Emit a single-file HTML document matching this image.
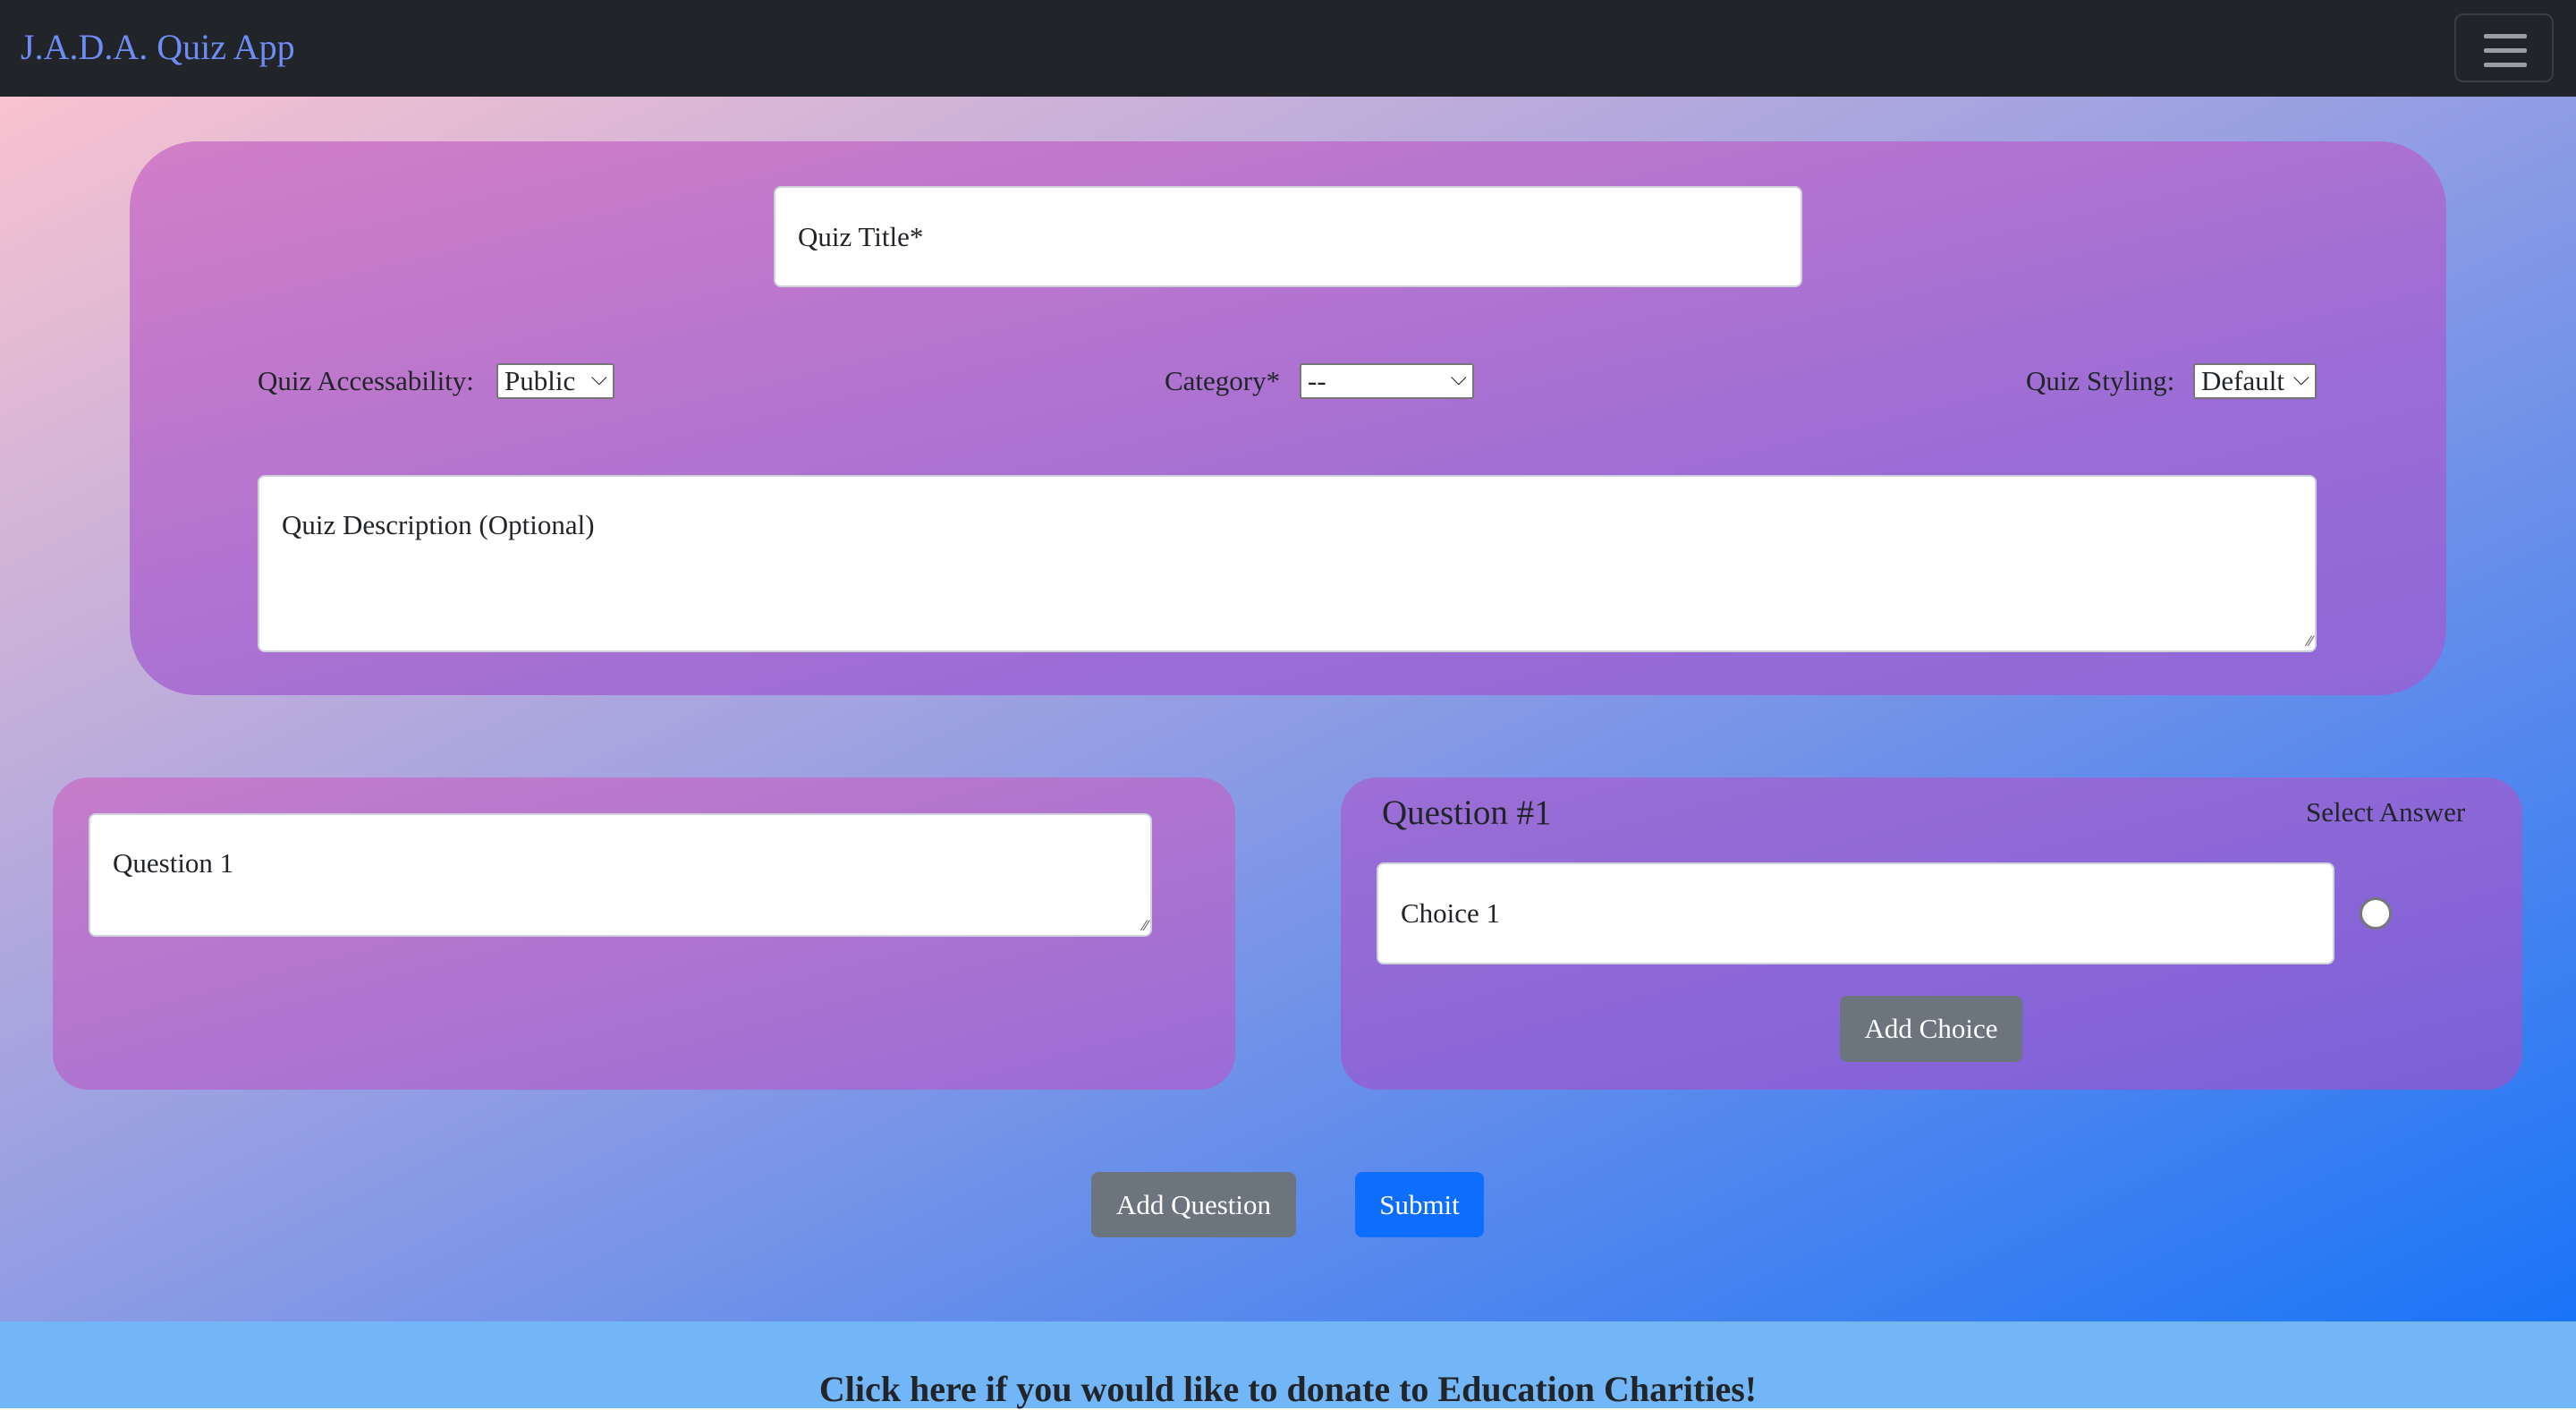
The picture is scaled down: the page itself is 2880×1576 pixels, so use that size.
<!DOCTYPE html>
<html><head><meta charset="utf-8"><style>
*{box-sizing:border-box;margin:0;padding:0}
body{width:2880px;height:1574px;overflow:hidden;font-family:"Liberation Serif",serif;color:#212529;position:relative}
.nav{position:absolute;left:0;top:0;width:2880px;height:108px;background:#212529}
.brand{position:absolute;left:23px;top:29px;font-size:40px;color:#6f8cf4}
.tog{position:absolute;left:2744px;top:15px;width:111px;height:77px;border:2px solid #3a3e44;border-radius:10px}
.tog i{position:absolute;left:31px;width:48px;height:5px;border-radius:2px;background:#9a9da1}
.bg{position:absolute;left:0;top:108px;width:2880px;height:1369px;background:linear-gradient(to bottom right,#f9c2d0,#9aa0e2 45%,#1a74f7)}
.foot{position:absolute;left:0;top:1477px;width:2880px;height:97px;background:#73b6f7;text-align:center;font-weight:bold;font-size:40px;padding-top:52px}
.card{position:absolute}
.inp{position:absolute;background:#fff;border:2px solid #ced4da;border-radius:8px;font-size:31px;padding-left:25px}
.grip{position:absolute;right:3px;bottom:1px;font-size:16px;color:#666;font-family:"DejaVu Sans",sans-serif}
.lab{position:absolute;font-size:31px;line-height:40px}
.sel{position:absolute;background:#fff;border:2px solid #767676;border-radius:3px;font-size:31px;line-height:36px;padding-left:7px}
.sel:after{content:"⌵";position:absolute;right:6px;top:-4px;font-size:24px;font-family:"DejaVu Sans",sans-serif}
.btn{position:absolute;color:#fff;font-size:31px;border-radius:8px;text-align:center}
</style></head><body>
<div class="nav"><div class="brand">J.A.D.A. Quiz App</div>
<div class="tog"><i style="top:21px"></i><i style="top:37px"></i><i style="top:53px"></i></div></div>
<div class="bg"></div>
<div class="card" style="left:145px;top:158px;width:2590px;height:619px;border-radius:75px;background:linear-gradient(to bottom right,#d27ec7,#9a6cd6 70%,#9067d8)"></div>
<div class="inp" style="left:865px;top:208px;width:1150px;height:113px;line-height:109px">Quiz Title*</div>
<div class="lab" style="left:288px;top:406px">Quiz Accessability:</div>
<div class="sel" style="left:555px;top:406px;width:132px;height:40px">Public</div>
<div class="lab" style="left:1302px;top:406px">Category*</div>
<div class="sel" style="left:1453px;top:406px;width:195px;height:40px">--</div>
<div class="lab" style="left:2265px;top:406px">Quiz Styling:</div>
<div class="sel" style="left:2452px;top:406px;width:138px;height:40px">Default</div>
<div class="inp" style="left:288px;top:531px;width:2302px;height:198px;padding-top:36px">Quiz Description (Optional)<span class="grip">⁄⁄</span></div>
<div class="card" style="left:59px;top:869px;width:1322px;height:349px;border-radius:40px;background:linear-gradient(to bottom right,#c57dca,#9a6cd6)"></div>
<div class="inp" style="left:99px;top:909px;width:1189px;height:138px;padding-top:36px">Question 1<span class="grip">⁄⁄</span></div>
<div class="card" style="left:1499px;top:869px;width:1321px;height:349px;border-radius:40px;background:linear-gradient(to bottom right,#9d6ed6,#7c60d8)"></div>
<div class="lab" style="left:1545px;top:884px;font-size:39px;line-height:50px">Question #1</div>
<div class="lab" style="left:2578px;top:888px">Select Answer</div>
<div class="inp" style="left:1539px;top:964px;width:1071px;height:114px;line-height:110px">Choice 1</div>
<div style="position:absolute;left:2638px;top:1003px;width:36px;height:36px;border-radius:50%;background:#fff;border:3px solid #777"></div>
<div class="btn" style="left:2057px;top:1113px;width:204px;height:74px;line-height:74px;background:#6c757d">Add Choice</div>
<div class="btn" style="left:1220px;top:1310px;width:229px;height:73px;line-height:73px;background:#6c757d">Add Question</div>
<div class="btn" style="left:1515px;top:1310px;width:144px;height:73px;line-height:73px;background:#0d6efd">Submit</div>
<div class="foot">Click here if you would like to donate to Education Charities!</div>
</body></html>
